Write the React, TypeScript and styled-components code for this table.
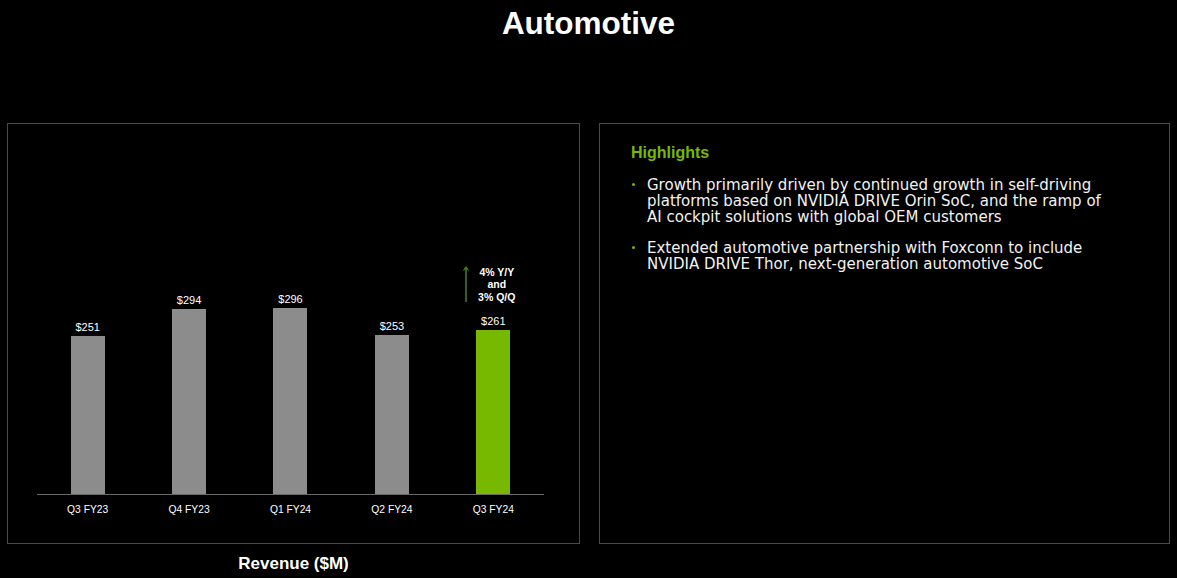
import React from "react";
import styled, { createGlobalStyle } from "styled-components";

const GlobalStyle = createGlobalStyle`
  html, body {
    margin: 0;
    padding: 0;
    background: #000;
  }
  body {
    font-family: "Liberation Sans", Arial, sans-serif;
    color: #fff;
  }
`;

const Page = styled.div`
  width: 1177px;
  height: 578px;
  overflow: hidden;
  background: #000;
`;

const Title = styled.h1`
  margin: 0;
  height: 123px;
  padding-top: 5px;
  box-sizing: border-box;
  text-align: center;
  font-size: 31.5px;
  font-weight: 700;
  line-height: 36px;
  color: #fff;
`;

const Row = styled.div`
  display: flex;
  gap: 19px;
  padding-left: 7px;
`;

const Column = styled.div`
  display: flex;
  flex-direction: column;
`;

const Panel = styled.div<{ $width: number }>`
  width: ${(p) => p.$width}px;
  height: 421px;
  box-sizing: border-box;
  border: 1px solid #4a4a4a;
`;

const ChartPanel = styled(Panel)`
  display: flex;
  flex-direction: column;
  justify-content: flex-end;
  padding: 0 35px 11px 29px;
`;

const Plot = styled.div`
  display: grid;
  grid-template-columns: repeat(5, 1fr);
  align-items: end;
  border-bottom: 1px solid #6a6a6a;
`;

const BarCol = styled.div`
  display: flex;
  flex-direction: column;
  align-items: center;
`;

const Value = styled.div`
  font-size: 11px;
  line-height: 12px;
  margin-bottom: 3px;
`;

const Bar = styled.div<{ $accent?: boolean }>`
  width: 34px;
  background: ${(p) => (p.$accent ? "#76b900" : "#8c8c8c")};
`;

const Labels = styled.div`
  display: grid;
  grid-template-columns: repeat(5, 1fr);
  padding-top: 9px;
  height: 28px;
`;

const AxisLabel = styled.div`
  text-align: center;
  font-size: 10.3px;
  line-height: 12px;
`;

const Annotation = styled.div`
  display: flex;
  align-items: center;
  gap: 9px;
  margin-bottom: 12px;
  margin-right: 8px;
`;

const AnnotationText = styled.div`
  font-size: 10.5px;
  font-weight: 700;
  line-height: 12.5px;
  text-align: center;
`;

const Caption = styled.div`
  text-align: center;
  font-size: 17px;
  font-weight: 700;
  line-height: 20px;
  margin-top: 10px;
`;

const TextPanel = styled(Panel)`
  padding: 19px 20px 0 31px;
`;

const Heading = styled.h2`
  margin: 0 0 14px;
  font-size: 16px;
  font-weight: 700;
  line-height: 20px;
  color: #76b900;
`;

const List = styled.ul`
  margin: 0;
  padding: 0;
  list-style: none;
`;

const Item = styled.li`
  position: relative;
  padding-left: 16px;
  font-family: "DejaVu Sans", sans-serif;
  font-size: 15px;
  line-height: 16px;
  color: #f2f2f2;
  margin-bottom: 15px;

  &::before {
    content: "";
    position: absolute;
    left: 1px;
    top: 6px;
    width: 3px;
    height: 3px;
    border-radius: 50%;
    background: #76b900;
  }
`;

const SCALE = 0.63;

const data = [
  { q: "Q3 FY23", v: 251 },
  { q: "Q4 FY23", v: 294 },
  { q: "Q1 FY24", v: 296 },
  { q: "Q2 FY24", v: 253 },
  { q: "Q3 FY24", v: 261, accent: true },
];

const UpArrow = () => (
  <svg width="6" height="36" viewBox="0 0 6 36">
    <line x1="3" y1="2" x2="3" y2="36" stroke="#4f8a1a" strokeWidth="1.4" />
    <path d="M0.5 4.5 L3 1 L5.5 4.5" fill="none" stroke="#4f8a1a" strokeWidth="1.2" />
  </svg>
);

const App = () => {
  return (
    <Page>
      <GlobalStyle />
      <Title>Automotive</Title>
      <Row>
        <Column>
          <ChartPanel $width={573}>
            <Plot>
              {data.map((d) => (
                <BarCol key={d.q}>
                  {d.accent && (
                    <Annotation>
                      <UpArrow />
                      <AnnotationText>
                        4% Y/Y
                        <br />
                        and
                        <br />
                        3% Q/Q
                      </AnnotationText>
                    </Annotation>
                  )}
                  <Value>${d.v}</Value>
                  <Bar $accent={d.accent} style={{ height: Math.round(d.v * SCALE) }} />
                </BarCol>
              ))}
            </Plot>
            <Labels>
              {data.map((d) => (
                <AxisLabel key={d.q}>{d.q}</AxisLabel>
              ))}
            </Labels>
          </ChartPanel>
          <Caption>Revenue ($M)</Caption>
        </Column>
        <TextPanel $width={571}>
          <Heading>Highlights</Heading>
          <List>
            <Item>
              Growth primarily driven by continued growth in self-driving
              <br />
              platforms based on NVIDIA DRIVE Orin SoC, and the ramp of
              <br />
              AI cockpit solutions with global OEM customers
            </Item>
            <Item>
              Extended automotive partnership with Foxconn to include
              <br />
              NVIDIA DRIVE Thor, next-generation automotive SoC
            </Item>
          </List>
        </TextPanel>
      </Row>
    </Page>
  );
};

export default App;
